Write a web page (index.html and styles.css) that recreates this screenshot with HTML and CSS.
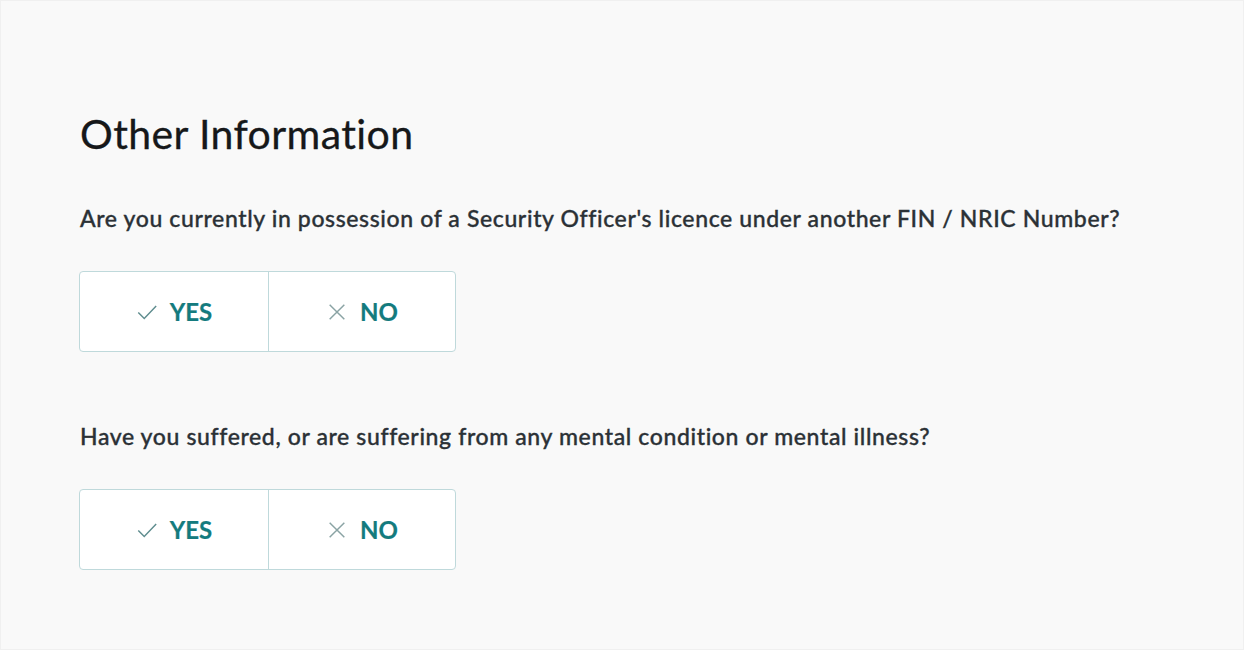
FILE: index.html
```html
<!DOCTYPE html>
<html lang="en">
<head>
<meta charset="utf-8">
<title>Other Information</title>
<link rel="stylesheet" href="styles.css">
</head>
<body>
<main class="page">
  <h1 class="title">Other Information</h1>

  <section class="question">
    <p class="question-text">Are you currently in possession of a Security Officer's licence under another FIN / NRIC Number?</p>
    <div class="choice-group">
      <button class="choice" type="button">
        <svg class="icon" viewBox="0 0 24 24" width="24" height="24"><path d="M2.5 12.5 L9 19 L22 5.5" fill="none" stroke="#5f8d8f" stroke-width="1.6"/></svg>
        <span>YES</span>
      </button>
      <button class="choice" type="button">
        <svg class="icon" viewBox="0 0 24 24" width="24" height="24"><path d="M4 4 L20 20 M20 4 L4 20" fill="none" stroke="#8aa3a4" stroke-width="1.6"/></svg>
        <span>NO</span>
      </button>
    </div>
  </section>

  <section class="question second">
    <p class="question-text">Have you suffered, or are suffering from any mental condition or mental illness?</p>
    <div class="choice-group">
      <button class="choice" type="button">
        <svg class="icon" viewBox="0 0 24 24" width="24" height="24"><path d="M2.5 12.5 L9 19 L22 5.5" fill="none" stroke="#5f8d8f" stroke-width="1.6"/></svg>
        <span>YES</span>
      </button>
      <button class="choice" type="button">
        <svg class="icon" viewBox="0 0 24 24" width="24" height="24"><path d="M4 4 L20 20 M20 4 L4 20" fill="none" stroke="#8aa3a4" stroke-width="1.6"/></svg>
        <span>NO</span>
      </button>
    </div>
  </section>
</main>
</body>
</html>
```

FILE: styles.css
```css
html, body {
  margin: 0;
  padding: 0;
  background: #f9f9f9;
}

body {
  font-family: Lato, "Noto Sans", sans-serif;
  height: 650px;
  box-sizing: border-box;
  border: 1px solid #f0f0f0;
}

.page {
  padding: 108px 0 0 79px;
}

.title {
  margin: 0;
  font-size: 41px;
  line-height: 49px;
  font-weight: 400;
  color: #16181a;
  letter-spacing: 0.4px;
  -webkit-text-stroke: 0.3px #16181a;
}

.question {
  margin-top: 46px;
}

.question.second {
  margin-top: 70px;
}

.question-text {
  margin: 0;
  font-size: 23px;
  line-height: 28px;
  color: #2b3136;
  font-weight: 500;
  letter-spacing: 0.62px;
  -webkit-text-stroke: 0.35px #2b3136;
}

.choice-group {
  margin-top: 39px;
  margin-left: -1px;
  display: inline-flex;
  background: #ffffff;
  border: 1px solid #bfd9db;
  border-radius: 4px;
}

.choice {
  width: 188px;
  height: 79px;
  display: flex;
  align-items: center;
  justify-content: center;
  gap: 12px;
  background: transparent;
  border: 0;
  padding: 0;
  font-family: Lato, "Noto Sans", sans-serif;
  font-size: 24px;
  font-weight: 700;
  color: #147b7e;
  -webkit-text-stroke: 0.2px #147b7e;
  cursor: pointer;
}

.choice + .choice {
  width: 187px;
  border-left: 1px solid #bfd9db;
}

.icon {
  width: 22px;
  height: 22px;
  flex: none;
}
```
